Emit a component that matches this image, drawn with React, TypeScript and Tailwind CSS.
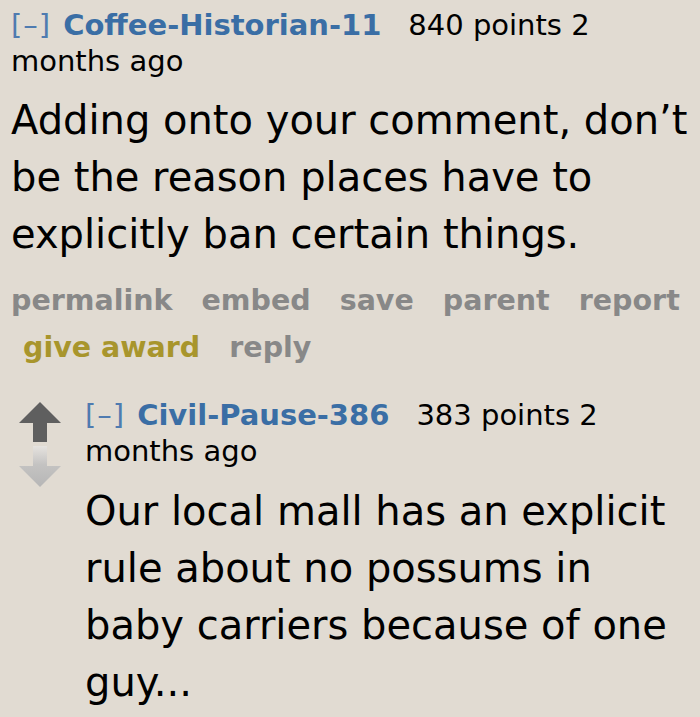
import React from "react";

const font = { fontFamily: '"DejaVu Sans", Verdana, sans-serif' };

function Arrows() {
  return (
    <svg width="46" height="90" viewBox="0 0 46 90">
      <defs>
        <linearGradient id="dn" x1="0" y1="0" x2="0" y2="1">
          <stop offset="0" stopColor="#e6e3df" />
          <stop offset="0.45" stopColor="#c4c3c2" />
          <stop offset="1" stopColor="#b6b6b6" />
        </linearGradient>
      </defs>
      <path d="M23 2 L44 23 L30 23 L30 42 L16 42 L16 23 L2 23 Z" fill="#5f5f5f" />
      <path d="M16 46 L30 46 L30 66 L44 66 L23 87 L2 66 L16 66 Z" fill="url(#dn)" />
    </svg>
  );
}

function Header({ user, points }: { user: string; points: string }) {
  return (
    <p className="max-w-[620px] text-[29px] leading-[36px]">
      <span className="tracking-[1px] text-[#4f7bb0]">[–]</span>
      <span className="ml-[12px] font-bold text-[#3a6ea5]">{user}</span>
      <span className="ml-[27px]">{points} points 2 months ago</span>
    </p>
  );
}

export default function App() {
  return (
    <div className="w-[700px] h-[717px] overflow-hidden bg-[#e1dbd2] text-black" style={font}>
      <div className="pl-[11px] pr-[4px] pt-[7px]">
        <Header user="Coffee-Historian-11" points="840" />
        <p className="mt-[13px] text-[40px] leading-[57px]">
          Adding onto your comment, don’t be the reason places have to explicitly ban certain things.
        </p>
        <div className="mt-[16px] flex flex-wrap gap-x-[29px] gap-y-[4px] text-[28.5px] leading-[43px] font-bold text-[#888888]">
          <span>permalink</span>
          <span>embed</span>
          <span>save</span>
          <span>parent</span>
          <span>report</span>
          <span className="ml-[12px] text-[#a8952c]">give award</span>
          <span>reply</span>
        </div>
      </div>
      <div className="mt-[28px] flex pl-[17px]">
        <div className="pt-[3px] w-[68px] shrink-0">
          <Arrows />
        </div>
        <div className="flex-1 pr-[4px]">
          <Header user="Civil-Pause-386" points="383" />
          <p className="mt-[14px] text-[40px] leading-[57px]">
            Our local mall has an explicit rule about no possums in baby carriers because of one guy...
          </p>
        </div>
      </div>
    </div>
  );
}
